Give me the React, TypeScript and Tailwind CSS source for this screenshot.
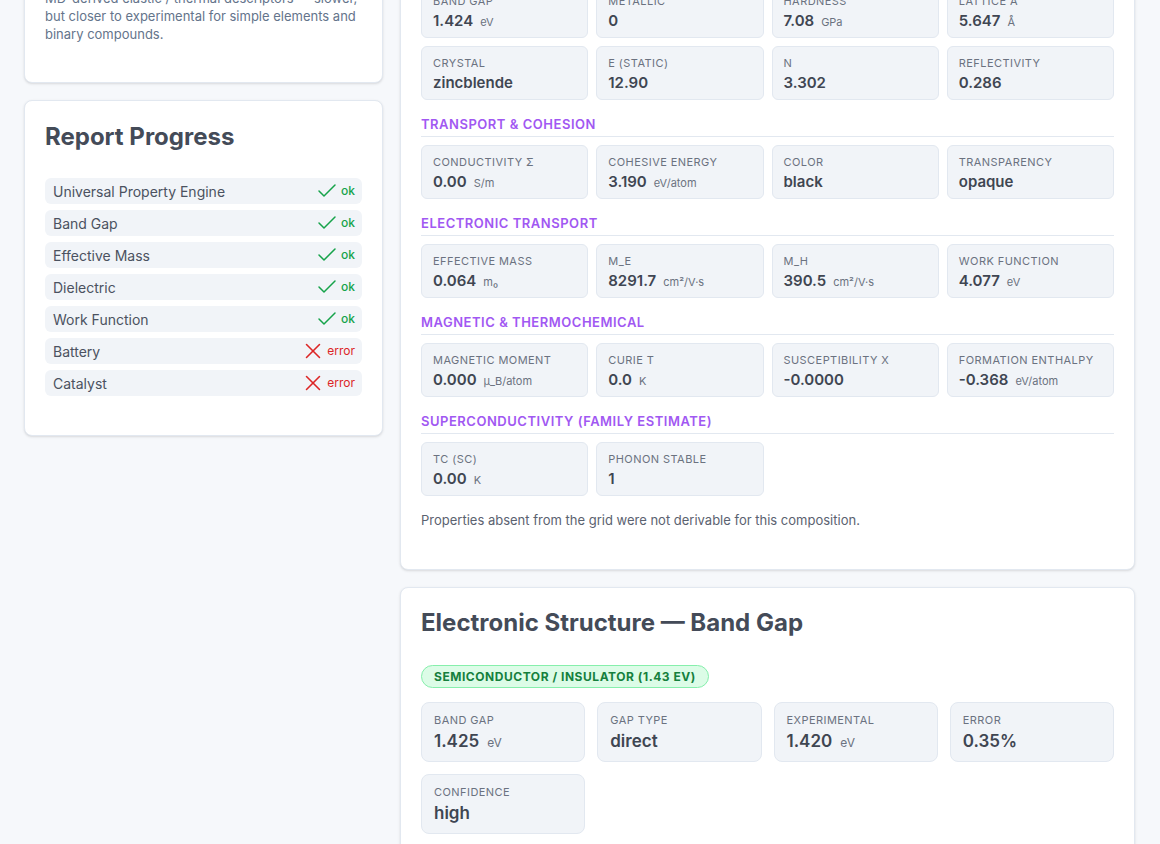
import { Check, X } from "lucide-react";

type Prop = { label: string; value: string; unit?: string };

const topRows: Prop[] = [
  { label: "BAND GAP", value: "1.424", unit: "eV" },
  { label: "METALLIC", value: "0" },
  { label: "HARDNESS", value: "7.08", unit: "GPa" },
  { label: "LATTICE A", value: "5.647", unit: "Å" },
  { label: "CRYSTAL", value: "zincblende" },
  { label: "E (STATIC)", value: "12.90" },
  { label: "N", value: "3.302" },
  { label: "REFLECTIVITY", value: "0.286" },
];

const sections: { title: string; items: Prop[] }[] = [
  {
    title: "TRANSPORT & COHESION",
    items: [
      { label: "CONDUCTIVITY Σ", value: "0.00", unit: "S/m" },
      { label: "COHESIVE ENERGY", value: "3.190", unit: "eV/atom" },
      { label: "COLOR", value: "black" },
      { label: "TRANSPARENCY", value: "opaque" },
    ],
  },
  {
    title: "ELECTRONIC TRANSPORT",
    items: [
      { label: "EFFECTIVE MASS", value: "0.064", unit: "m₀" },
      { label: "M_E", value: "8291.7", unit: "cm²/V·s" },
      { label: "M_H", value: "390.5", unit: "cm²/V·s" },
      { label: "WORK FUNCTION", value: "4.077", unit: "eV" },
    ],
  },
  {
    title: "MAGNETIC & THERMOCHEMICAL",
    items: [
      { label: "MAGNETIC MOMENT", value: "0.000", unit: "μ_B/atom" },
      { label: "CURIE T", value: "0.0", unit: "K" },
      { label: "SUSCEPTIBILITY Χ", value: "-0.0000" },
      { label: "FORMATION ENTHALPY", value: "-0.368", unit: "eV/atom" },
    ],
  },
  {
    title: "SUPERCONDUCTIVITY (FAMILY ESTIMATE)",
    items: [
      { label: "TC (SC)", value: "0.00", unit: "K" },
      { label: "PHONON STABLE", value: "1" },
    ],
  },
];

const progress = [
  { name: "Universal Property Engine", ok: true },
  { name: "Band Gap", ok: true },
  { name: "Effective Mass", ok: true },
  { name: "Dielectric", ok: true },
  { name: "Work Function", ok: true },
  { name: "Battery", ok: false },
  { name: "Catalyst", ok: false },
];

const bandGap: Prop[] = [
  { label: "BAND GAP", value: "1.425", unit: "eV" },
  { label: "GAP TYPE", value: "direct" },
  { label: "EXPERIMENTAL", value: "1.420", unit: "eV" },
  { label: "ERROR", value: "0.35%" },
  { label: "CONFIDENCE", value: "high" },
];

function Cell({ p }: { p: Prop }) {
  return (
    <div className="h-[54px] rounded-md border border-[#e2e8f0] bg-[#f1f4f8] px-[11px] pt-[8px]">
      <div className="text-[11px] leading-4 tracking-[0.04em] text-[#6b7280]">{p.label}</div>
      <div className="mt-[2px] flex items-baseline leading-5">
        <span className="text-[15px] font-semibold text-[#3f4652]">{p.value}</span>
        {p.unit && <span className="ml-[7px] text-[11px] text-[#6b7280]">{p.unit}</span>}
      </div>
    </div>
  );
}

function BigCell({ p }: { p: Prop }) {
  return (
    <div className="h-[60px] rounded-lg border border-[#e2e8f0] bg-[#f1f4f8] px-3 pt-[9px]">
      <div className="text-[11px] leading-4 tracking-[0.04em] text-[#6b7280]">{p.label}</div>
      <div className="mt-[1px] flex items-baseline leading-6">
        <span className="text-[17px] font-semibold text-[#3f4652]">{p.value}</span>
        {p.unit && <span className="ml-2 text-[12px] text-[#6b7280]">{p.unit}</span>}
      </div>
    </div>
  );
}

export default function App() {
  return (
    <div className="h-[844px] overflow-hidden bg-[#f6f8fb] font-['Inter',sans-serif]">
      <div className="-mt-[38px] flex items-start gap-[17px] pl-6 pr-[25px]">
        {/* left column */}
        <div className="flex w-[359px] shrink-0 flex-col gap-[17px]">
          <div className="rounded-lg border border-[#e2e8f0] bg-white px-5 pt-[26px] pb-[39px] shadow-sm">
            <p className="text-[13px] leading-[18px] text-[#64748b]">
              MD-derived elastic / thermal descriptors — slower, but closer to experimental for simple
              elements and binary compounds.
            </p>
          </div>

          <div className="rounded-lg border border-[#e2e8f0] bg-white px-5 pt-5 pb-[39px] shadow-sm">
            <h2 className="text-[24px] leading-8 font-bold text-[#444b58]">Report Progress</h2>
            <ul className="mt-[25px] flex flex-col gap-[6px]">
              {progress.map((r) => (
                <li
                  key={r.name}
                  className="flex h-[26px] items-center justify-between rounded-md bg-[#f1f4f8] pr-[7px] pl-2 text-[14px] text-[#4b5260]"
                >
                  <span>{r.name}</span>
                  {r.ok ? (
                    <span className="flex items-center gap-[2px] text-[12px] font-medium text-[#16a34a]">
                      <Check size={24} strokeWidth={1.5} className="text-[#16a34a]" />
                      ok
                    </span>
                  ) : (
                    <span className="flex items-center gap-[1px] text-[12px] text-[#dc2626]">
                      <X size={26} strokeWidth={1.4} />
                      error
                    </span>
                  )}
                </li>
              ))}
            </ul>
          </div>
        </div>

        {/* right column */}
        <div className="flex min-w-0 flex-1 flex-col gap-[17px]">
          <div className="rounded-lg border border-[#e2e8f0] bg-white px-5 pt-[21px] pb-[39px] shadow-sm">
            <div className="grid grid-cols-4 gap-2">
              {topRows.map((p) => (
                <Cell key={p.label} p={p} />
              ))}
            </div>
            {sections.map((s) => (
              <div key={s.title}>
                <h3 className="mt-[14px] mb-2 border-b border-[#e2e8f0] pb-[2px] text-[13px] leading-5 font-semibold tracking-[0.04em] text-[#a158f2]">
                  {s.title}
                </h3>
                <div className="grid grid-cols-4 gap-2">
                  {s.items.map((p) => (
                    <Cell key={p.label} p={p} />
                  ))}
                </div>
              </div>
            ))}
            <p className="mt-[14px] text-[13px] leading-5 text-[#5b6270]">
              Properties absent from the grid were not derivable for this composition.
            </p>
          </div>

          <div className="rounded-lg border border-[#e2e8f0] bg-white px-5 pt-[19px] pb-10 shadow-sm">
            <h2 className="text-[24px] leading-8 font-bold text-[#444b58]">
              Electronic Structure — Band Gap
            </h2>
            <span className="mt-[26px] inline-block rounded-full border border-[#86efac] bg-[#dcfce7] px-3 text-[12px] leading-[21px] font-bold tracking-[0.045em] text-[#15803d]">
              SEMICONDUCTOR / INSULATOR (1.43 EV)
            </span>
            <div className="mt-[14px] grid grid-cols-4 gap-3">
              {bandGap.map((p) => (
                <BigCell key={p.label} p={p} />
              ))}
            </div>
          </div>
        </div>
      </div>
    </div>
  );
}
